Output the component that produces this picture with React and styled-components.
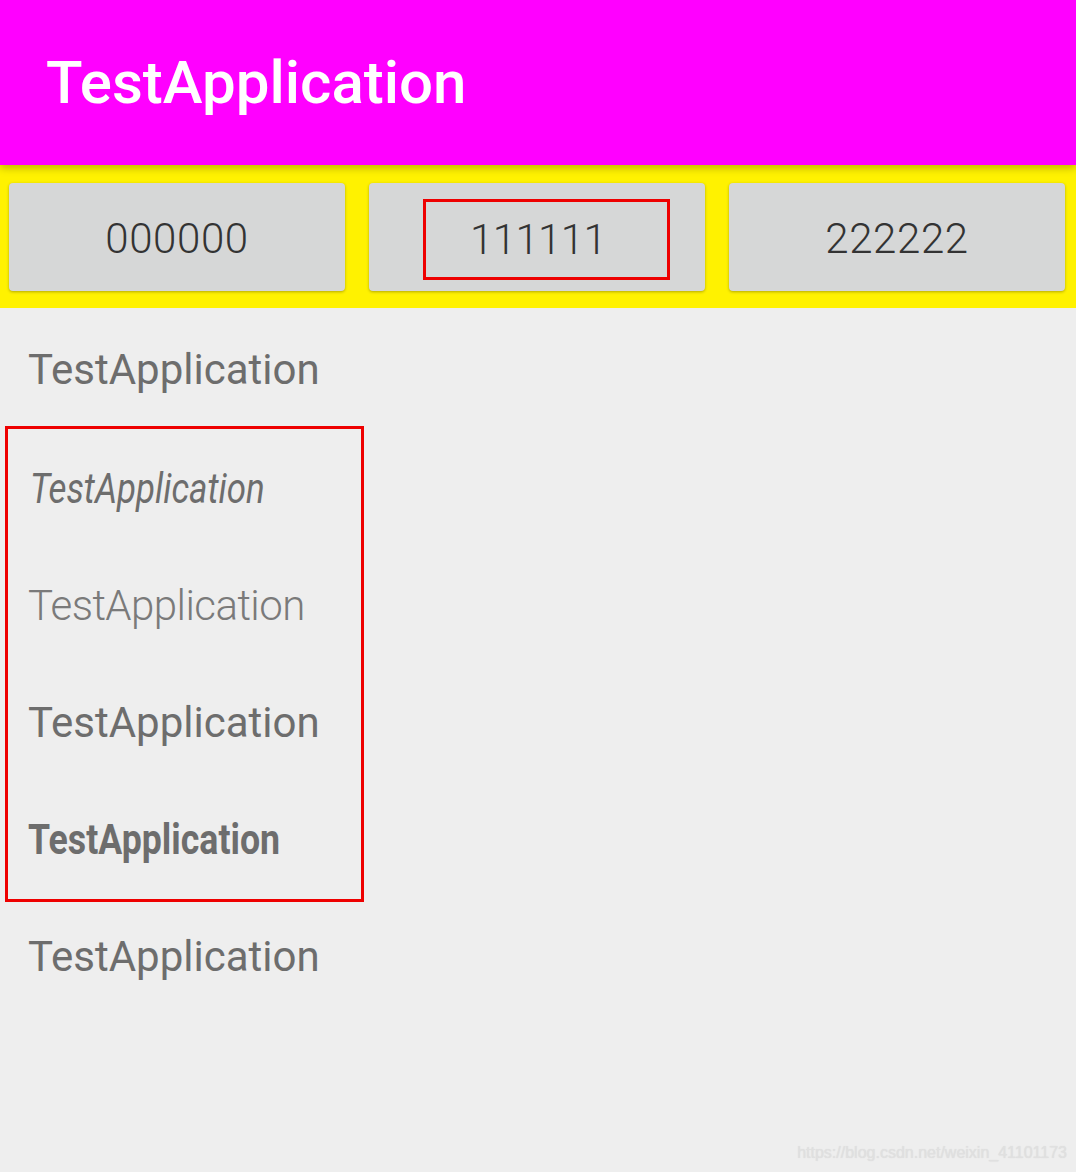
import React from 'react';
import styled, { createGlobalStyle } from 'styled-components';

const GlobalStyle = createGlobalStyle`
  html, body {
    margin: 0;
    padding: 0;
    background: #eeeeee;
  }
  body {
    font-family: Roboto, "Noto Sans", sans-serif;
  }
`;

const Page = styled.div`
  display: flex;
  flex-direction: column;
  width: 1076px;
  height: 1172px;
  background: #eeeeee;
  overflow: hidden;
`;

const AppBar = styled.header`
  position: relative;
  z-index: 2;
  height: 165px;
  flex: none;
  display: flex;
  align-items: center;
  padding-left: 46px;
  background: #ff00ff;
  box-shadow: 0 3px 8px rgba(0, 0, 0, 0.25);
`;

const Title = styled.h1`
  margin: 0;
  font-family: Roboto, sans-serif;
  font-weight: 500;
  font-size: 60px;
  color: #ffffff;
`;

const Toolbar = styled.div`
  flex: none;
  height: 143px;
  box-sizing: border-box;
  padding: 18px 11px 17px 9px;
  display: grid;
  grid-template-columns: repeat(3, 1fr);
  column-gap: 24px;
  background: #fff200;
`;

const Button = styled.button`
  display: flex;
  align-items: center;
  justify-content: center;
  border: none;
  border-radius: 4px;
  background: #d6d7d7;
  box-shadow: 0 1px 3px rgba(0, 0, 0, 0.3);
  font-family: Roboto, sans-serif;
  font-weight: 300;
  font-size: 42px;
  color: #333333;
  letter-spacing: 0.6px;
  padding: 3px 0 0;
`;

// annotation frame around the middle label
const Marked = styled.span`
  display: flex;
  align-items: center;
  box-sizing: border-box;
  width: 241px;
  height: 75px;
  margin: 2px 0 0 19px;
  padding-left: 44px;
  letter-spacing: -0.6px;
  outline: 3px solid #ee0000;
`;

const List = styled.div`
  display: flex;
  flex-direction: column;
  padding-top: 3px;
`;

const Group = styled.div`
  display: flex;
  flex-direction: column;
  width: 351px;
  margin: 2px 0 0 9px;
  outline: 3px solid #ee0000;
  outline-offset: 1px;
`;

const Row = styled.div`
  height: 117px;
  line-height: 117px;
  padding-left: ${(p) => p.$indent || 28}px;
  font-family: Roboto, sans-serif;
  font-size: 42px;
  font-weight: ${(p) => (p.$weight ? p.$weight : 400)};
  font-style: ${(p) => (p.$italic ? 'italic' : 'normal')};
  letter-spacing: ${(p) => p.$tracking || 0}px;
  color: ${(p) => p.$color || '#6d6d6d'};
  white-space: nowrap;
`;

const Condensed = styled.span`
  display: inline-block;
  transform: scaleX(${(p) => p.$scale});
  transform-origin: left center;
`;

const Watermark = styled.div`
  margin-top: auto;
  align-self: flex-end;
  padding: 0 9px 10px 0;
  font-family: "Liberation Sans", Arial, sans-serif;
  font-size: 16px;
  color: #e0e0e0;
  text-shadow: 0 0 1px #d8d8d8;
`;

const labels = ['000000', '111111', '222222'];

const App = () => (
  <>
    <GlobalStyle />
    <Page>
      <AppBar>
        <Title>TestApplication</Title>
      </AppBar>
      <Toolbar>
        {labels.map((label) => (
          <Button type="button" key={label}>
            {label === '111111' ? <Marked>{label}</Marked> : label}
          </Button>
        ))}
      </Toolbar>
      <List>
        <Row>TestApplication</Row>
        <Group>
          <Row $indent={21} $italic>
            <Condensed $scale={0.83}>TestApplication</Condensed>
          </Row>
          <Row $indent={19} $weight={300} $tracking={-0.55} $color="#7a7a7a">TestApplication</Row>
          <Row $indent={19}>TestApplication</Row>
          <Row $indent={19} $weight={700}>
            <Condensed $scale={0.85}>TestApplication</Condensed>
          </Row>
        </Group>
        <Row>TestApplication</Row>
      </List>
      <Watermark>https://blog.csdn.net/weixin_41101173</Watermark>
    </Page>
  </>
);

export default App;
